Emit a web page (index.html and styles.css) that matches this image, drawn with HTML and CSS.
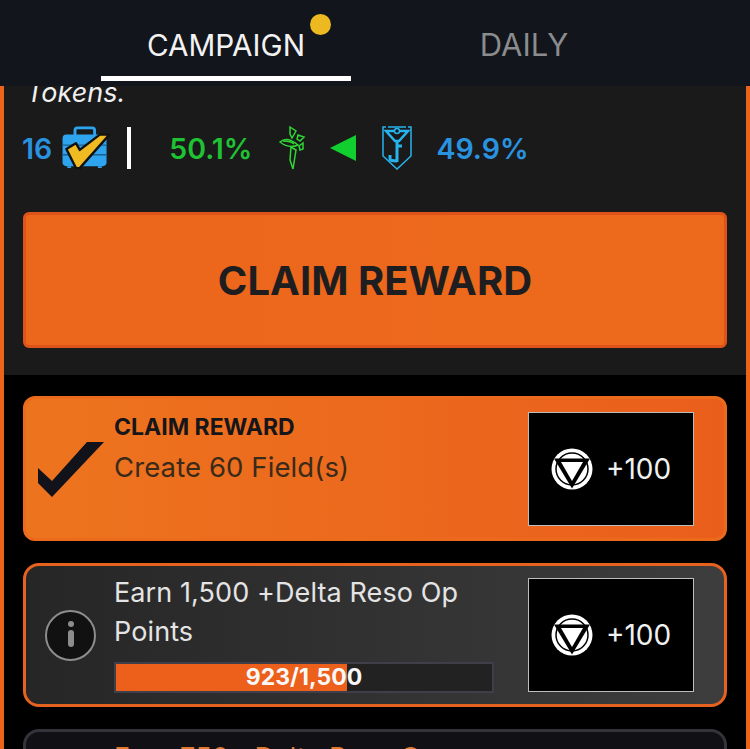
FILE: index.html
```html
<!DOCTYPE html>
<html>
<head>
	<meta charset="utf8">
	<title>Campaign</title>
	<link rel="stylesheet" href="styles.css">
</head>
<body>
	<svg class="defs" width="0" height="0">
		<symbol id="reward" viewBox="0 0 42 42">
			<circle cx="21" cy="21" r="20.500" fill="#fff"/>
			<circle cx="21" cy="21" r="16" fill="none" stroke="#000" stroke-width="1.500"/>
			<path d="M3 10.500H39L21 40.500Z" fill="#000"/>
			<path d="M10 14H32L21 33Z" fill="#fff"/>
		</symbol>
	</svg>

	<header class="tabs">
		<div class="tab active">CAMPAIGN<span class="dot"></span></div>
		<div class="tab">DAILY</div>
	</header>

	<main class="frame">
		<section class="top">
			<p class="intro">Tokens.</p>
			<div class="stats">
				<span class="count">16</span>
				<svg class="case" viewBox="0 0 50 46">
					<path d="M14 10V4.500Q14 2 16.500 2H32Q34.500 2 34.500 4.500V10" fill="none" stroke="#2ea4ee" stroke-width="3"/>
					<rect x="1" y="9" width="46" height="33" rx="4" fill="#2ea4ee"/>
					<path d="M1 20H47M1 30H47" stroke="#17608f" stroke-width="1.500"/>
					<path d="M6 42H10V44H6ZM38 42H42V44H38Z" fill="#2ea4ee"/>
					<path d="M5 24L15 18L19 25L40 9H50L19 44H15Z" fill="#f0bb22" stroke="#111" stroke-width="2.500" stroke-linejoin="round"/>
				</svg>
				<span class="sep"></span>
				<span class="pct green">50.1%</span>
				<svg class="faction" viewBox="0 0 28 44" fill="none" stroke="#2fd634" stroke-width="1.500">
					<path d="M11 1L17 5L13 12L11 8Z"/>
					<path d="M19 9L25 11L21 15L18 13Z"/>
					<path d="M20 20L24 17L24 23L21 24Z"/>
					<path d="M1 16Q8 10 19 19Q10 23 1 16Z"/>
					<path d="M4 15Q12 15 15 18"/>
					<path d="M12 21L17 24L14 43L11 34Z"/>
				</svg>
				<span class="arrow"></span>
				<svg class="faction shield" viewBox="0 0 30 44" fill="none" stroke="#27b4ee" stroke-width="1.500">
					<path d="M4 1H1V30L15 43L29 30V1H26M6 1H24"/>
					<path d="M4 5H26L17 15H13Z" stroke-width="2.500"/>
					<circle cx="15" cy="5" r="2.500" fill="#1a1a1a"/>
					<path d="M15 14V36M15 20H20M8 29V33Q8 35 15 35" stroke-width="3"/>
				</svg>
				<span class="pct blue">49.9%</span>
			</div>
			<button class="claim">CLAIM REWARD</button>
		</section>

		<section class="list">
			<div class="card done">
				<svg class="check" viewBox="0 0 68 56"><path d="M1 27L15 40L50 1H67L15 56L1 42Z" fill="#12121a"/></svg>
				<div class="body">
					<div class="label">CLAIM REWARD</div>
					<div class="title">Create 60 Field(s)</div>
				</div>
				<div class="prize"><svg class="coin"><use href="#reward"/></svg>+100</div>
			</div>

			<div class="card open">
				<div class="info"><span class="info-dot"></span><span class="info-bar"></span></div>
				<div class="body">
					<div class="title">Earn 1,500 +Delta Reso Op Points</div>
					<div class="bar">
						<div class="fill" style="width: 61.500%"></div>
						<span class="bar-text">923/1,500</span>
					</div>
				</div>
				<div class="prize"><svg class="coin"><use href="#reward"/></svg>+100</div>
			</div>

			<div class="card next">
				<div class="body">
					<div class="title">Earn 750 +Delta Reso Op</div>
				</div>
			</div>
		</section>
	</main>
</body>
</html>
```

FILE: styles.css
```css
html, body {
	margin: 0;
	padding: 0;
	height: 749px;
	overflow: hidden;
	background: #000;
	font-family: "Inter", "Noto Sans", sans-serif;
}
.defs {
	display: block;
}

.tabs {
	display: flex;
	height: 86px;
	padding-left: 101px;
	background: #12151b;
}
.tab {
	width: 250px;
	height: 76px;
	padding-top: 25px;
	box-sizing: border-box;
	font-size: 29.700px;
	line-height: 40px;
	text-align: center;
	color: #8a8c8e;
	position: relative;
}
.tab + .tab {
	width: 346px;
	font-size: 31px;
}
.tab.active {
	color: #f2f2f2;
	height: 81px;
	border-bottom: 5px solid #fff;
}
.dot {
	position: absolute;
	left: 209px;
	top: 14px;
	width: 21px;
	height: 21px;
	border-radius: 50%;
	background: #edb920;
}

.frame {
	height: 663px;
	overflow: hidden;
	box-sizing: border-box;
	border-left: 4px solid #ec641c;
	border-right: 4px solid #ec641c;
}
.top {
	height: 289px;
	padding: 0 19px;
	background: #1a1a1a;
	overflow: hidden;
}
.intro {
	margin: -9px 0 0 3px;
	font-size: 27px;
	line-height: 32px;
	font-style: italic;
	color: #f0f0f0;
}
.stats {
	display: flex;
	align-items: center;
	height: 44px;
	margin-top: 17px;
}
.count, .pct {
	font-size: 28.500px;
	font-weight: 600;
}
.count {
	color: #2a93e0;
	margin-left: -1px;
}
.case {
	width: 49px;
	height: 44px;
	margin-left: 9px;
}
.sep {
	width: 4px;
	height: 42px;
	margin-left: 17px;
	background: #fff;
}
.pct.green {
	color: #1fc232;
	margin-left: 38px;
}
.faction {
	width: 30px;
	height: 44px;
	margin-left: 26px;
}
.arrow {
	margin-left: 22px;
	border-top: 13px solid transparent;
	border-bottom: 13px solid transparent;
	border-right: 26px solid #12cf30;
}
.faction.shield {
	margin-left: 26px;
}
.pct.blue {
	color: #2a93e0;
	margin-left: 24px;
}
.claim {
	display: block;
	width: 704px;
	height: 136px;
	margin-top: 42px;
	border: 3px solid #de531a;
	border-radius: 6px;
	background: linear-gradient(to right, #ec661c, #ed6a1c);
	font-family: inherit;
	font-size: 40px;
	font-weight: 700;
	color: #1e1e20;
}

.list {
	display: flex;
	flex-direction: column;
	gap: 22px;
	padding: 21px 19px 0;
}
.card {
	display: flex;
	align-items: center;
	box-sizing: border-box;
	flex: none;
	border-radius: 16px;
}
.done {
	height: 145px;
	padding: 0 30px 0 11px;
	border: 3px solid #ec6a1c;
	border-radius: 12px;
	background: linear-gradient(to right, #ed741e, #ea5e1c);
}
.open {
	height: 144px;
	padding: 0 30px 0 19px;
	border: 3px solid #e8621f;
	background: linear-gradient(to right, #262626, #3d3d3d);
}
.next {
	height: 100px;
	padding: 0 0 0 68px;
	align-items: flex-start;
	border: 3px solid #333339;
	background: #101015;
}
.check {
	width: 68px;
	height: 56px;
	flex: none;
}
.info {
	display: flex;
	flex-direction: column;
	align-items: center;
	box-sizing: border-box;
	flex: none;
	width: 51px;
	height: 51px;
	border: 2px solid #8d8d8d;
	border-radius: 50%;
	background: #111;
	padding-top: 9px;
	gap: 3px;
}
.info-dot {
	width: 6px;
	height: 6px;
	border-radius: 50%;
	background: #8d8d8d;
}
.info-bar {
	width: 6px;
	height: 17px;
	border-radius: 3px;
	background: #8d8d8d;
}
.body {
	flex: 1;
	min-width: 0;
	padding-left: 18px;
	align-self: flex-start;
	padding-top: 7px;
}
.label {
	font-size: 23px;
	line-height: 30px;
	font-weight: 700;
	color: #15151a;
}
.title {
	font-size: 27px;
	letter-spacing: 0.100px;
	line-height: 39px;
	color: #e4e4e4;
}
.done .body {
	padding-left: 9px;
	padding-top: 13px;
}
.done .title {
	font-size: 27.500px;
	margin-top: 6px;
	color: #3a2a1a;
}
.open .title {
	width: 400px;
}
.next .body {
	padding-left: 20px;
	padding-top: 6px;
}
.next .title {
	color: #e07830;
}
.bar {
	position: relative;
	box-sizing: border-box;
	width: 380px;
	height: 31px;
	margin-top: 11px;
	border: 2px solid #3f3f4c;
	background: #222;
}
.fill {
	height: 100%;
	background: #ec601c;
}
.bar-text {
	position: absolute;
	left: 0;
	right: 0;
	top: 0;
	text-align: center;
	font-size: 23px;
	line-height: 27px;
	font-weight: 700;
	color: #f8f8f8;
}
.prize {
	display: flex;
	align-items: center;
	justify-content: center;
	box-sizing: border-box;
	flex: none;
	gap: 13px;
	width: 166px;
	height: 114px;
	border: 1px solid #bdbdbd;
	background: #000;
	font-size: 28px;
	color: #f0f0f0;
}
.coin {
	width: 42px;
	height: 42px;
}
```
